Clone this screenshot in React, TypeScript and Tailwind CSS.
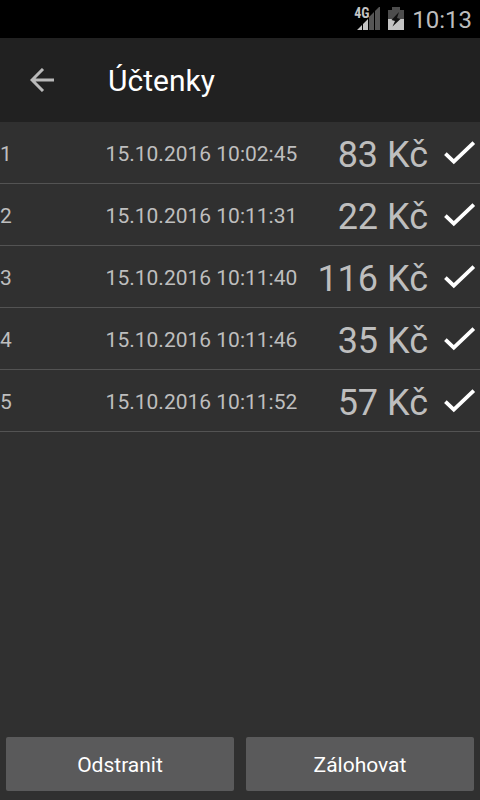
interface Receipt {
  id: number;
  date: string;
  amount: string;
}

const receipts: Receipt[] = [
  { id: 1, date: '15.10.2016 10:02:45', amount: '83 Kč' },
  { id: 2, date: '15.10.2016 10:11:31', amount: '22 Kč' },
  { id: 3, date: '15.10.2016 10:11:40', amount: '116 Kč' },
  { id: 4, date: '15.10.2016 10:11:46', amount: '35 Kč' },
  { id: 5, date: '15.10.2016 10:11:52', amount: '57 Kč' },
];

function SignalIcon() {
  return (
    <div className="relative h-6 w-[26px]">
      <svg viewBox="0 0 26 24" className="h-6 w-[26px]" aria-hidden="true">
        <path d="M3 23 L8 18 V23 Z M9 17 L14 12 V23 H9 Z" fill="#c4c4c4" />
        <path d="M15 10 L20 5 V23 H15 Z M21 4 L26 -1 V23 H21 Z" fill="#565656" />
      </svg>
      <span className="absolute top-0 left-0 font-['Roboto_Condensed','Roboto',sans-serif] text-sm leading-3 font-bold text-[#c4c4c4]">
        4G
      </span>
    </div>
  );
}

function BatteryIcon() {
  return (
    <svg viewBox="0 0 16 24" className="h-6 w-4" aria-hidden="true">
      <path d="M4 0 H12 V3 H16 V12 H0 V3 H4 Z" fill="#4d4d4d" />
      <path d="M0 12 H16 V23 H0 Z" fill="#c4c4c4" />
      <path d="M11 5 L3.5 13 L7 14 L4.5 19.5 L12.5 12 L9 11 Z" fill="#111111" />
    </svg>
  );
}

function BackIcon() {
  return (
    <svg viewBox="0 0 24 24" className="h-6 w-6" fill="none" stroke="#b9b9b9" strokeWidth="3" aria-hidden="true">
      <path d="M13 1 L2 12 L13 23 M1.5 12 H24" />
    </svg>
  );
}

function CheckIcon() {
  return (
    <svg viewBox="0 0 32 24" className="h-6 w-8" fill="none" stroke="#ffffff" strokeWidth="3.8" role="img" aria-label="OK">
      <path d="M1.4 12.6 L9.8 20.6 L29.8 1.6" />
    </svg>
  );
}

function StatusBar() {
  return (
    <div className="flex h-[38px] items-center justify-end bg-black pr-2 text-[#bdbdbd]">
      <SignalIcon />
      <div className="mr-2 ml-2">
        <BatteryIcon />
      </div>
      <span className="pt-0.5 text-2xl">10:13</span>
    </div>
  );
}

function ReceiptRow({ receipt }: { receipt: Receipt }) {
  return (
    <tr className="h-[62px] *:border-b *:border-[#535353]">
      <td className="w-[22%] p-0 pt-1 text-[21px]">{receipt.id}</td>
      <td className="p-0 pt-1 text-[21px] whitespace-nowrap">{receipt.date}</td>
      <td className="p-0 pt-1 text-right text-4xl whitespace-nowrap">{receipt.amount}</td>
      <td className="w-[52px] p-0 pl-4">
        <CheckIcon />
      </td>
    </tr>
  );
}

export default function App() {
  return (
    <div className="flex min-h-screen flex-col bg-[#303030] font-['Roboto','Liberation_Sans',sans-serif] text-[#bebebe]">
      <StatusBar />

      <header className="flex h-[84px] items-center bg-[#212121]">
        <button type="button" aria-label="Zpět" className="flex h-full w-[84px] items-center justify-center">
          <BackIcon />
        </button>
        <h1 className="pt-0.5 pl-6 text-3xl text-white">Účtenky</h1>
      </header>

      <main className="flex-1">
        <table className="w-full border-separate border-spacing-0">
          <tbody>
            {receipts.map((receipt) => (
              <ReceiptRow key={receipt.id} receipt={receipt} />
            ))}
          </tbody>
        </table>
      </main>

      <footer className="flex gap-3 px-1.5 pb-[9px]">
        <button type="button" className="h-[54px] flex-1 rounded-xs bg-[#5a5a5b] pt-1 text-[21px] text-white">
          Odstranit
        </button>
        <button type="button" className="h-[54px] flex-1 rounded-xs bg-[#5a5a5b] pt-1 text-[21px] text-white">
          Zálohovat
        </button>
      </footer>
    </div>
  );
}
